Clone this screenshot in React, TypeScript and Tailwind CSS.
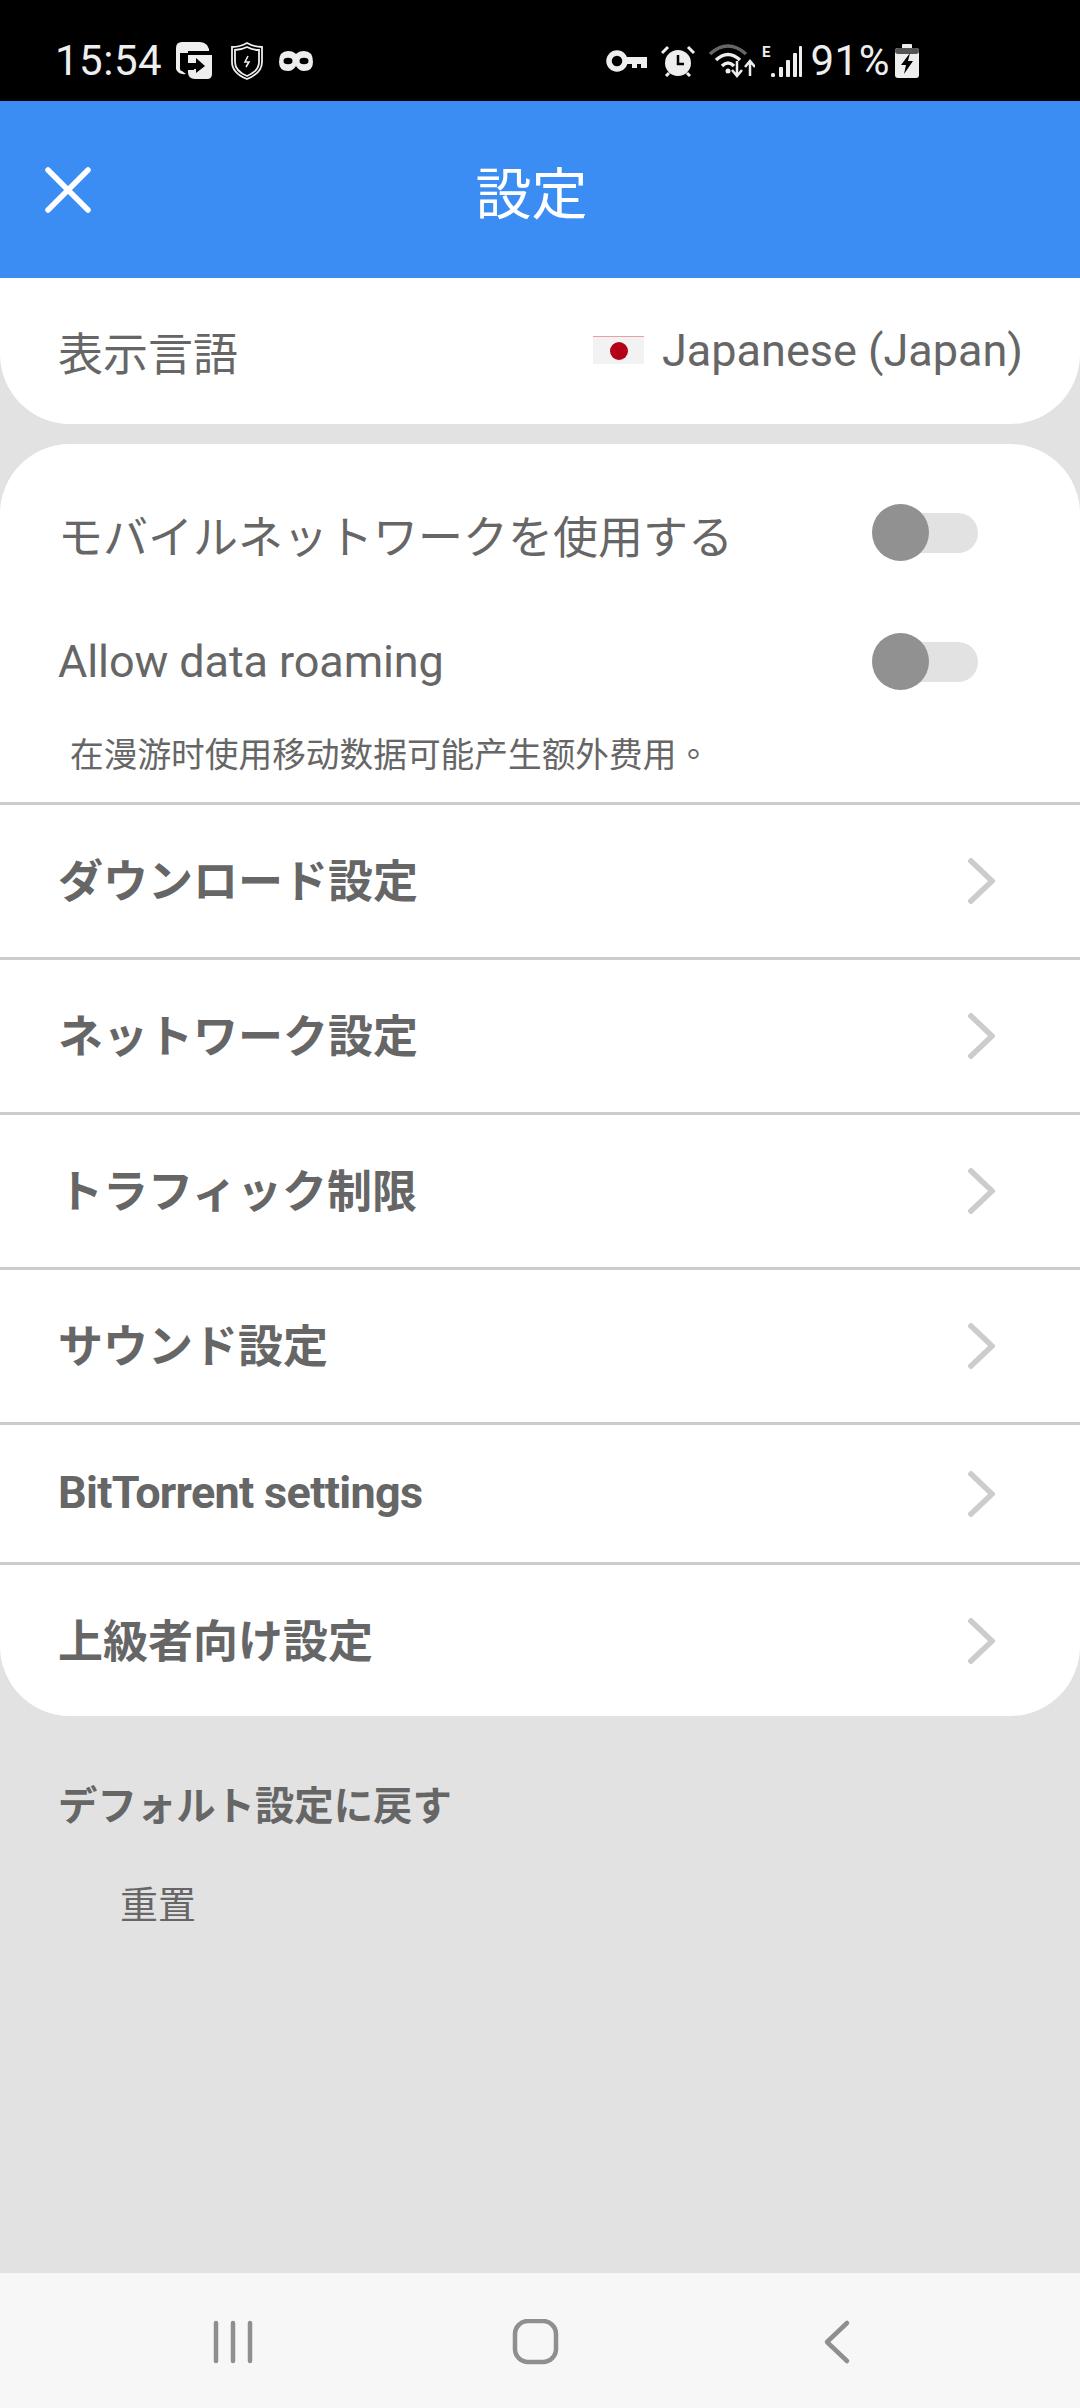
import React from "react";

const FONT = 'font-["Roboto","Noto_Sans_CJK_JP",sans-serif]';

function Toggle() {
  return (
    <div className="relative w-[106px] h-[57px] flex items-center">
      <div className="ml-[30px] w-[76px] h-[40px] rounded-r-[20px] bg-[#e2e2e2]" />
      <div className="absolute left-0 top-0 w-[57px] h-[57px] rounded-full bg-[#919191]" />
    </div>
  );
}

function Chevron() {
  return (
    <svg width="27" height="46" viewBox="0 0 27 46" fill="none" stroke="#cccccc" strokeWidth="5.5" strokeLinecap="square">
      <path d="M3 3 L24 23 L3 43" />
    </svg>
  );
}

function Row({ label, h, latin }: { label: string; h: string; latin?: boolean }) {
  return (
    <div className={`${h} border-t-[3px] border-[#cccccc] flex items-center justify-between pl-[58px] pr-[85px]`}>
      {latin ? (
        <span className="text-[45px] leading-none font-bold text-[#666666] tracking-[-0.7px] -mt-[3px]">{label}</span>
      ) : (
        <span className="text-[45px] leading-none font-bold text-[#666666] mt-[3px]">{label}</span>
      )}
      <Chevron />
    </div>
  );
}

function StatusLeftIcons() {
  return (
    <div className="flex items-center">
      <svg width="38" height="38" viewBox="0 0 38 38" className="ml-[14px]" fill="#eeeeee">
        <path d="M6 0 H24 Q28 0 31 3 L33 7 V9 H12 V11 H4 V27 Q4 29 6 29 L10 32 Q2 33 0 27 V6 Q0 0 6 0 Z" />
        <path d="M12 13 H36 V32 Q36 37 31 37 H19 Q12 37 12 30 V28 H18 V24 H12 Z" />
        <path d="M10 21 H20 V16 L29 24 L20 31 V27 H10 Z" fill="#000000" />
      </svg>
      <svg width="32" height="38" viewBox="0 0 32 38" className="ml-[17px]" fill="none" stroke="#eeeeee" strokeWidth="1.8">
        <path d="M16 1 Q23 5 31 5 V20 Q31 31 16 37 Q1 31 1 20 V5 Q9 5 16 1 Z" />
        <path d="M16 5 Q22 8 28 8 V20 Q28 29 16 34 Q4 29 4 20 V8 Q10 8 16 5 Z" />
        <path d="M17 14 L14 20 H18 L15 25" strokeWidth="1.6" />
      </svg>
      <svg width="34" height="20" viewBox="0 0 34 20" className="ml-[16px]" fill="#eeeeee">
        <path d="M9 0 Q14 0 17 3 Q20 0 25 0 Q34 0 34 11 Q34 20 25 20 Q20 20 17 15 Q14 20 9 20 Q0 20 0 11 Q0 0 9 0 Z" />
        <ellipse cx="9" cy="10" rx="4.5" ry="3.2" fill="#000000" />
        <ellipse cx="25" cy="10" rx="4.5" ry="3.2" fill="#000000" />
      </svg>
    </div>
  );
}

function StatusRightIcons() {
  return (
    <div className="flex items-center">
      <svg width="42" height="24" viewBox="0 0 42 24" fill="none">
        <circle cx="11" cy="12" r="8" stroke="#eeeeee" strokeWidth="5.5" />
        <path d="M18 8 H41 V19 H35 V15 H31 V19 H26 V15 H18 Z" fill="#eeeeee" />
      </svg>
      <svg width="34" height="32" viewBox="0 0 34 32" className="ml-[13px]" fill="#eeeeee">
        <circle cx="17" cy="18" r="13" />
        <path d="M1 8 L7 2 M33 8 L27 2 M5 31 L8 28 M29 31 L26 28" stroke="#eeeeee" strokeWidth="3" />
        <path d="M17 10 V19 H23" stroke="#000000" strokeWidth="2.5" fill="none" />
      </svg>
      <svg width="46" height="34" viewBox="0 0 46 34" className="ml-[14px]" fill="none">
        <path d="M1 10 Q19 -6 37 10" stroke="#666666" strokeWidth="3.5" />
        <path d="M7 16 Q19 5 31 16" stroke="#eeeeee" strokeWidth="3.5" />
        <path d="M13 22 Q19 16 25 22" stroke="#eeeeee" strokeWidth="3.5" />
        <circle cx="19" cy="27" r="2.5" fill="#eeeeee" />
        <path d="M28 17 V32 M23 26 L28 32 L33 26" stroke="#eeeeee" strokeWidth="2.5" />
        <path d="M41 32 V18 M36 23 L41 17 L46 23" stroke="#eeeeee" strokeWidth="2.5" />
      </svg>
      <svg width="40" height="34" viewBox="0 0 40 34" className="ml-[7px]">
        <text x="0" y="13" fill="#eeeeee" fontSize="15" fontWeight="700" fontFamily="Roboto">E</text>
        <rect x="9" y="29" width="4" height="4" rx="1.5" fill="#eeeeee" />
        <rect x="17" y="23" width="4" height="10" rx="1" fill="#eeeeee" />
        <rect x="24" y="16" width="4" height="17" rx="1" fill="#eeeeee" />
        <rect x="31" y="9" width="4" height="24" rx="1" fill="#eeeeee" />
        <rect x="37" y="2" width="3" height="31" rx="1" fill="#eeeeee" />
      </svg>
      <span className="ml-[9px] text-[42px] leading-none text-[#eeeeee] tracking-[0.5px]">91%</span>
      <svg width="24" height="34" viewBox="0 0 24 34" className="ml-[5px]" fill="#eeeeee">
        <rect x="7" y="0" width="10" height="5" rx="1" />
        <rect x="0" y="4" width="24" height="30" rx="3" />
        <rect x="0" y="4" width="24" height="6" rx="3" fill="#555555" />
        <path d="M15 9 L6 21 H11 L9 30 L18 17 H13 Z" fill="#000000" />
      </svg>
    </div>
  );
}

export default function App() {
  return (
    <div className={`w-[1080px] h-[2408px] flex flex-col bg-[#e2e2e2] overflow-hidden ${FONT}`}>
      <div className="h-[101px] shrink-0 bg-black flex items-center justify-between pl-[55px] pr-[161px] pt-[20px]">
        <div className="flex items-center">
          <span className="text-[42px] leading-none text-[#eeeeee] tracking-[0.5px]">15:54</span>
          <StatusLeftIcons />
        </div>
        <StatusRightIcons />
      </div>

      <div className="h-[177px] shrink-0 bg-[#3b8cf3] flex items-center pl-[45px] pr-[108px]">
        <svg width="46" height="46" viewBox="0 0 46 46" fill="none" stroke="#ffffff" strokeWidth="5.5" strokeLinecap="round">
          <path d="M3 3 L43 43 M43 3 L3 43" />
        </svg>
        <div className="flex-1 text-center text-[56px] leading-none text-white mt-[10px]">設定</div>
      </div>

      <div className="h-[146px] shrink-0 bg-white rounded-b-[70px] flex items-center justify-between pl-[58px] pr-[57px]">
        <span className="text-[45px] leading-none text-[#666666] mt-[8px]">表示言語</span>
        <div className="flex items-center -mt-[2px]">
          <div className="w-[51px] h-[28px] bg-[#f2f2f2] border-t border-[#e8a0a8] flex items-center justify-center">
            <div className="w-[18px] h-[18px] rounded-full bg-[#b40018]" />
          </div>
          <span className="ml-[18px] text-[45px] leading-none text-[#666666]">Japanese (Japan)</span>
        </div>
      </div>

      <div className="mt-[20px] shrink-0 bg-white rounded-[70px] overflow-hidden">
        <div className="pt-[24px]">
          <div className="h-[129px] flex items-center justify-between pl-[58px] pr-[102px]">
            <span className="text-[45px] leading-none text-[#666666] mt-[12px]">モバイルネットワークを使用する</span>
            <Toggle />
          </div>
          <div className="h-[129px] flex items-center justify-between pl-[58px] pr-[102px]">
            <span className="text-[45px] leading-[46px] text-[#666666] tracking-[-0.1px]">Allow data roaming</span>
            <Toggle />
          </div>
          <div className="h-[76px] pl-[70px] pt-[5px] text-[33.7px] leading-[44px] text-[#666666] font-['Roboto','Noto_Sans_CJK_SC',sans-serif]">
            在漫游时使用移动数据可能产生额外费用<span className="font-['Noto_Sans_CJK_TC',sans-serif]">。</span>
          </div>
        </div>
        <Row label="ダウンロード設定" h="h-[155px]" />
        <Row label="ネットワーク設定" h="h-[155px]" />
        <Row label="トラフィック制限" h="h-[155px]" />
        <Row label="サウンド設定" h="h-[155px]" />
        <Row label="BitTorrent settings" h="h-[140px]" latin />
        <Row label="上級者向け設定" h="h-[154px]" />
      </div>

      <div className="pl-[58px] pt-[70px] text-[39.4px] leading-[42px] font-bold text-[#666666]">デフォルト設定に戻す</div>
      <div className="pl-[120px] pt-[55px] text-[38px] leading-[44px] text-[#666666] font-['Roboto','Noto_Sans_CJK_SC',sans-serif]">重置</div>

      <div className="mt-auto h-[135px] shrink-0 bg-[#f7f7f7] flex items-start pt-[46px]">
        <svg width="1080" height="46" viewBox="0 0 1080 46" fill="none" stroke="#8f8f8f" strokeLinecap="round" strokeLinejoin="round">
          <path d="M216 4 V42 M233 4 V42 M250 4 V42" strokeWidth="4.5" />
          <rect x="515" y="2" width="41" height="41" rx="13" strokeWidth="4.5" />
          <path d="M847 4 L827 23 L847 42" strokeWidth="4.5" />
        </svg>
      </div>
    </div>
  );
}
